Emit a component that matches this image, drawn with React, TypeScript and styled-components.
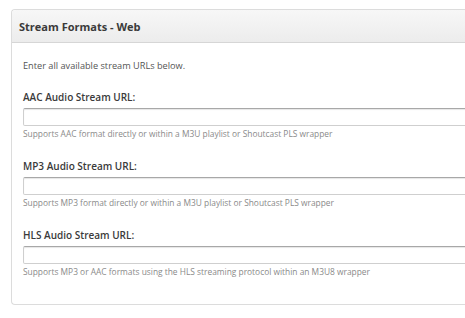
import styled, { createGlobalStyle } from "styled-components";

const GlobalStyle = createGlobalStyle`
  html, body {
    margin: 0;
    padding: 0;
    background: #fff;
    font-family: "Open Sans", "Liberation Sans", sans-serif;
  }
`;

const fields = [
  {
    label: "AAC Audio Stream URL:",
    help: "Supports AAC format directly or within a M3U playlist or Shoutcast PLS wrapper",
  },
  {
    label: "MP3 Audio Stream URL:",
    help: "Supports MP3 format directly or within a M3U playlist or Shoutcast PLS wrapper",
  },
  {
    label: "HLS Audio Stream URL:",
    help: "Supports MP3 or AAC formats using the HLS streaming protocol within an M3U8 wrapper",
  },
];

const App = () => {
  return (
    <>
      <GlobalStyle />
      <Page>
        <Panel>
          <Header>
            <Title>Stream Formats - Web</Title>
          </Header>
          <Body>
            <Intro>Enter all available stream URLs below.</Intro>
            {fields.map((f) => (
              <Field key={f.label}>
                <Label>{f.label}</Label>
                <Input type="text" />
                <Help>{f.help}</Help>
              </Field>
            ))}
          </Body>
        </Panel>
      </Page>
    </>
  );
};

export default App;

const Page = styled.div`
  padding: 9px 0 0 11px;
  width: 454px;
  overflow: hidden;
`;

const Panel = styled.div`
  border: 1px solid #dcdcdc;
  border-right: none;
  border-radius: 4px 0 0 4px;
  background: #fff;
  height: 296px;
  box-sizing: border-box;
`;

const Header = styled.div`
  height: 33px;
  box-sizing: border-box;
  border-bottom: 1px solid #d6d6d6;
  background: linear-gradient(#f7f7f7, #ececec);
  border-radius: 4px 0 0 0;
  display: flex;
  align-items: center;
  padding: 0 7px;
`;

const Title = styled.h3`
  margin: 0;
  font-size: 11px;
  font-weight: 700;
  color: #3a3a3a;
`;

const Body = styled.div`
  padding: 16px 11px 0;
  display: flex;
  flex-direction: column;
`;

const Intro = styled.p`
  margin: 0 0 17px;
  font-size: 9.2px;
  line-height: 14px;
  color: #555;
`;

const Field = styled.div`
  display: flex;
  flex-direction: column;
  margin-bottom: 18px;
`;

const Label = styled.label`
  font-size: 10px;
  font-weight: 600;
  color: #3a3a3a;
  line-height: 15px;
  margin-bottom: 3px;
`;

const Input = styled.input`
  height: 18px;
  width: 480px;
  box-sizing: border-box;
  border: 1px solid #cfcfcf;
  border-top-color: #a8a8a8;
  box-shadow: inset 0 1px 1px rgba(0, 0, 0, 0.1);
  border-radius: 2px;
  padding: 0 4px;
  margin: 0;
  outline: none;
`;

const Help = styled.span`
  font-size: 8.4px;
  line-height: 15px;
  color: #8a8a8a;
`;
